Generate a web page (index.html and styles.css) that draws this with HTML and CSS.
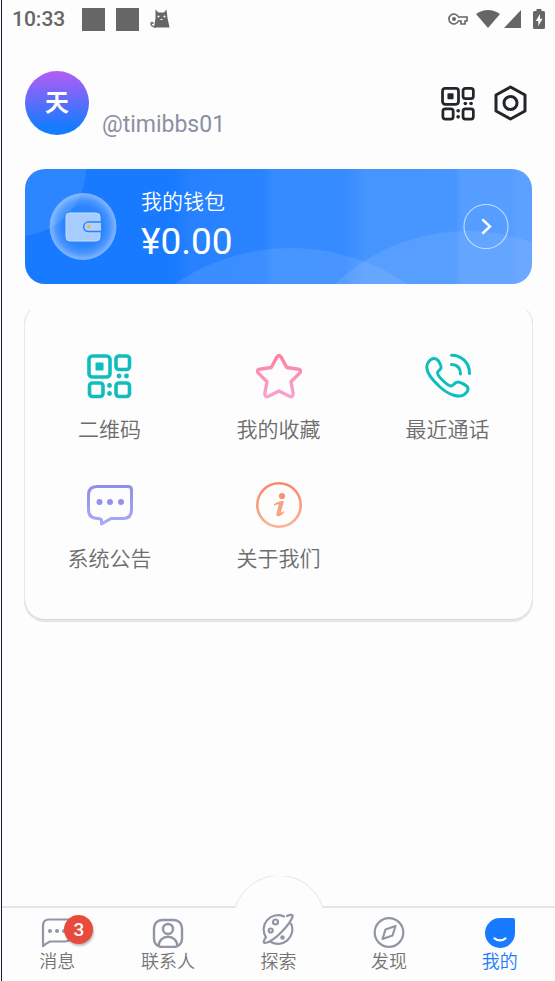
FILE: index.html
```html
<!DOCTYPE html>
<html lang="zh-CN">
<head>
<meta charset="utf-8">
<meta name="viewport" content="width=device-width, initial-scale=1">
<title>我的</title>
<link rel="stylesheet" href="styles.css">
</head>
<body>
<svg class="defs" width="0" height="0" aria-hidden="true">
  <defs>
    <symbol id="qr" viewBox="0 0 46 46">
      <g fill="none" stroke="currentColor" stroke-width="3.6">
        <rect x="2" y="3" width="21" height="21" rx="3.5"/>
        <rect x="29" y="3" width="13.5" height="13.5" rx="3"/>
        <rect x="2.5" y="30" width="13.5" height="13.5" rx="3"/>
        <rect x="29" y="30" width="13.5" height="13.5" rx="3"/>
      </g>
      <g fill="currentColor">
        <rect x="8.5" y="9.5" width="8" height="8" rx="1"/>
        <circle cx="32" cy="23" r="2.4"/><circle cx="39.5" cy="23" r="2.4"/>
        <circle cx="22.5" cy="32.5" r="2.4"/><circle cx="22.5" cy="40.5" r="2.4"/>
      </g>
    </symbol>
  </defs>
</svg>
<div class="app">
  <div class="status">
    <span class="time">10:33</span>
    <span class="square"></span>
    <span class="square"></span>
    <svg class="cat" width="20" height="20" viewBox="0 0 20 20">
      <path fill="#666" d="M5.5 .5 L8.5 3.5 H14 L16.5 .5 L17.5 9 L19.5 18.5 H4 L5.5 9Z"/>
      <path fill="none" stroke="#666" stroke-width="1.3" d="M6 18 C2 18 .8 16 1 14.5 C1.3 13 3.3 13.2 3 15"/>
      <g fill="#fff"><circle cx="8.5" cy="7.5" r="1"/><circle cx="14.5" cy="7.5" r="1"/><rect x="10.5" y="10" width="2" height="1"/></g>
    </svg>
    <span class="spacer"></span>
    <svg class="key" width="20" height="14" viewBox="0 0 20 14">
      <path fill="none" stroke="#666" stroke-width="1.6" d="M10.5 5 A5 5 0 1 0 10.5 9 H13 V12 H17 V9 H19 V5Z"/>
      <circle cx="6" cy="7" r="2" fill="#666"/>
    </svg>
    <svg class="wifi" width="24" height="19" viewBox="0 0 24 19"><path fill="#666" d="M0 4 Q12 -4 24 4 L12 18Z"/></svg>
    <svg class="signal" width="17" height="18" viewBox="0 0 17 18"><path fill="#666" d="M17 0V18H0Z"/></svg>
    <svg class="battery" width="12" height="20" viewBox="0 0 12 20">
      <path fill="#666" d="M3.5 0H8.5V2H10.5Q12 2 12 3.5V18.5Q12 20 10.5 20H1.5Q0 20 0 18.5V3.5Q0 2 1.5 2H3.5Z"/>
      <path fill="#fff" d="M7 5 L2.8 12 H5.3 V17 L9.5 9.8 H7Z"/>
    </svg>
  </div>

  <header class="profile">
    <div class="avatar">天</div>
    <span class="handle">@timibbs01</span>
    <button class="icon-button" aria-label="二维码"><svg width="35" height="35"><use href="#qr"/></svg></button>
    <button class="icon-button" aria-label="设置">
      <svg width="35" height="37" viewBox="0 0 35 37" fill="none" stroke="#222529" stroke-width="3">
        <path stroke-linejoin="round" d="M17.5 2 L32 10 V26 L17.5 34 L3 26 V10Z"/>
        <circle cx="17.5" cy="18" r="6.5"/>
      </svg>
    </button>
  </header>

  <main>
    <a class="wallet" href="#wallet">
      <svg class="wallet-art" viewBox="0 0 507 115" preserveAspectRatio="xMidYMid slice" aria-hidden="true">
        <defs>
          <linearGradient id="sheen" x1="0" x2="1" y1="0" y2="0">
            <stop offset=".29" stop-color="#187aff"/><stop offset=".33" stop-color="#2882ff"/>
            <stop offset=".47" stop-color="#2a84ff"/><stop offset=".49" stop-color="#358bff"/>
            <stop offset=".63" stop-color="#368bff"/><stop offset=".67" stop-color="#4695ff"/>
            <stop offset=".85" stop-color="#4796ff"/><stop offset=".86" stop-color="#559dff"/>
            <stop offset=".96" stop-color="#559dff"/><stop offset=".97" stop-color="#5ca1ff"/>
          </linearGradient>
          <radialGradient id="glass">
            <stop offset=".6" stop-color="#fff" stop-opacity=".08"/>
            <stop offset=".82" stop-color="#fff" stop-opacity=".22"/>
            <stop offset="1" stop-color="#fff" stop-opacity=".46"/>
          </radialGradient>
        </defs>
        <rect width="507" height="115" fill="url(#sheen)"/>
        <g fill="#fff" fill-opacity=".09">
          <circle cx="-7" cy="-1" r="68"/>
          <circle cx="266" cy="284" r="205"/>
          <circle cx="442" cy="253" r="191"/>
        </g>
      </svg>
      <svg class="wallet-icon" width="68" height="68" viewBox="0 0 68 68" aria-hidden="true">
        <circle cx="34" cy="33.5" r="33" fill="url(#glass)" stroke="#78b0ff" stroke-width="1"/>
        <rect x="17" y="20" width="34" height="28" rx="4" fill="#a9ccff" stroke="#c3dcff"/>
        <path d="M52 29H39.5a4.8 4.8 0 0 0 0 9.6H52" fill="#b0d0ff" stroke="#2b82f4" stroke-width="1.5"/>
        <circle cx="40" cy="33.8" r="1.7" fill="#f5b52e"/>
      </svg>
      <span class="wallet-text">
        <span class="wallet-title">我的钱包</span>
        <span class="wallet-amount">¥0.00</span>
      </span>
      <svg class="wallet-go" width="46" height="46" viewBox="0 0 46 46" fill="none" stroke="#fff" aria-hidden="true">
        <circle cx="23" cy="22.5" r="22" stroke-opacity=".6" stroke-width="1.2"/>
        <path stroke-width="2.4" stroke-linecap="round" d="M20 16 L27 22.5 L20 29"/>
      </svg>
    </a>

    <nav class="menu" aria-label="功能">
      <a href="#qrcode"><svg class="teal" width="46" height="46"><use href="#qr"/></svg><span>二维码</span></a>
      <a href="#favorites">
        <svg width="46" height="46" viewBox="0 0 46 46">
          <defs><linearGradient id="pink" x2="0" y2="1"><stop stop-color="#ff819c"/><stop offset="1" stop-color="#f9a3cc"/></linearGradient></defs>
          <path fill="none" stroke="url(#pink)" stroke-width="3.4" stroke-linejoin="round" d="M20.7 4.4 Q23 .6 25.3 4.4 L30.7 14.5 L42.5 16.2 Q46 17.1 43.6 20.1 L35 28.7 L37.2 40.5 Q37.1 44.8 33.5 43.3 L23 38 L12.5 43.3 Q8.9 44.8 8.8 40.5 L11 28.7 L2.4 20.1 Q0 17.1 3.5 16.2 L15.3 14.5Z"/>
        </svg><span>我的收藏</span></a>
      <a href="#calls">
        <svg class="teal" width="46" height="46" viewBox="0 0 46 46" fill="none" stroke="currentColor" stroke-width="3" stroke-linecap="round" stroke-linejoin="round">
          <path d="M3.2 9.5 C6 5.2 9.5 5 12 6.5 C14 8 16.5 13 16 15 C15.5 17 12.5 17.5 12.5 20 C12.7 23.5 22.5 32.8 26 33 C29 33 29.5 28.5 33 29 C36 29.5 41 32 42.5 34 C44 37 41.5 40 38.5 42 C34 44.5 25 43 15 34 C4 24 -.5 15 3.2 9.5Z"/>
          <path d="M26.5 11.5 C32 11.7 35.5 15 35.5 21 M26.5 2.3 C37 2.2 44.5 10 44.5 20.5"/>
        </svg><span>最近通话</span></a>
      <a href="#notices">
        <svg width="46" height="46" viewBox="0 0 46 46">
          <defs><linearGradient id="violet" x2="0" y2="1"><stop stop-color="#8e8eee"/><stop offset="1" stop-color="#a9a9f4"/></linearGradient></defs>
          <path fill="none" stroke="url(#violet)" stroke-width="3" stroke-linejoin="round" d="M10 4.5 H41 Q44.5 4.5 44.5 8 V28 Q44.5 36.5 36 36.5 H24 L14.5 42 V38 Q14 36.5 11 36.5 Q1.5 36.5 1.5 27.5 V13 Q1.5 4.5 10 4.5Z"/>
          <g fill="#9492ef"><circle cx="12.5" cy="20" r="3"/><circle cx="23" cy="20" r="3"/><circle cx="34" cy="20" r="3"/></g>
        </svg><span>系统公告</span></a>
      <a href="#about">
        <svg width="46" height="46" viewBox="0 0 46 46">
          <defs><linearGradient id="orange" x2="0" y2="1"><stop stop-color="#fb8767"/><stop offset="1" stop-color="#f9b393"/></linearGradient></defs>
          <circle cx="23" cy="23" r="21.7" fill="none" stroke="url(#orange)" stroke-width="2.6"/>
          <circle cx="26" cy="14" r="3.1" fill="#f99270"/>
          <path fill="#f8a27f" d="M18 22.5 C20 20 24 18.8 28 19 L25 30 C24.7 31.3 26 31 28 29 L28.5 30 C25.5 34.5 19.5 36 20.5 31.5 L22.7 23 C22.5 21.5 20.5 22 18.3 24Z"/>
        </svg><span>关于我们</span></a>
    </nav>
  </main>

  <nav class="tabs" aria-label="主导航">
    <svg class="bump" width="90" height="32" viewBox="0 0 90 32" aria-hidden="true">
      <path fill="#fdfdfd" d="M1 32 A46 46 0 0 1 89 32Z"/>
      <path fill="none" stroke="#e5e5e5" d="M1 32 A46 46 0 0 1 89 32"/>
    </svg>
    <a href="#messages">
      <span class="tab-icon">
        <svg width="32" height="32" viewBox="0 0 32 32" fill="none" stroke="currentColor" stroke-width="2.2" stroke-linejoin="round">
          <path d="M8 3.5 H28 Q30 3.5 30 5.5 V19 Q30 25.5 24 25.5 H9 Q6 27 2 30 V10 Q2 3.5 8 3.5Z"/>
          <g fill="currentColor" stroke="none"><circle cx="9" cy="15" r="2"/><circle cx="16" cy="15" r="2"/><circle cx="23" cy="15" r="2"/></g>
        </svg>
        <span class="badge">3</span>
      </span><span>消息</span></a>
    <a href="#contacts">
      <span class="tab-icon"><svg width="32" height="32" viewBox="0 0 32 32" fill="none" stroke="currentColor" stroke-width="2.4">
        <rect x="2" y="4" width="28" height="27" rx="8"/><circle cx="16" cy="13" r="5"/><path d="M6.5 30.5 C7 17.5 25 17.5 25.5 30.5"/>
      </svg></span><span>联系人</span></a>
    <a href="#explore">
      <span class="tab-icon raised"><svg width="32" height="32" viewBox="0 0 32 32" fill="none" stroke="currentColor" stroke-width="2.2" stroke-linecap="round" stroke-linejoin="round">
        <path d="M22 3.5 A14.3 14.3 0 0 0 4 24.3 M8.5 28.7 A14.3 14.3 0 0 0 29.2 11 M25 3 C28 1.5 31.5 1 30.5 4 C27 12.5 13 27.5 4 29.8 C.8 30.5 1 28 4 24.3"/>
        <circle cx="13.5" cy="9" r="2.5"/><circle cx="8.7" cy="17.5" r="2"/><circle cx="20.5" cy="24.5" r="1.2"/>
      </svg></span><span>探索</span></a>
    <a href="#discover">
      <span class="tab-icon"><svg width="32" height="32" viewBox="0 0 32 32" fill="none" stroke="currentColor" stroke-width="2.2" stroke-linejoin="round">
        <circle cx="16" cy="16.5" r="14.3"/><path d="M12.5 13.5 L22.5 10 L19.5 19.5 L9.5 23Z"/>
      </svg></span><span>发现</span></a>
    <a class="active" href="#me" aria-current="page">
      <span class="tab-icon"><svg width="32" height="32" viewBox="0 0 32 32">
        <path fill="currentColor" d="M16 2 H29 Q31 2 31 4 V17 A15 15 0 1 1 16 2Z"/>
        <path fill="none" stroke="#fff" stroke-width="2.2" stroke-linecap="round" d="M10.5 22.3 Q16 26.5 21.5 22.3"/>
      </svg></span><span>我的</span></a>
  </nav>
</div>
</body>
</html>
```

FILE: styles.css
```css
* { box-sizing: border-box; }

body {
  margin: 0;
  background: #fdfdfd;
  font-family: Roboto, "Noto Sans CJK SC", sans-serif;
  color: #6c6c6c;
}

a { color: inherit; text-decoration: none; }
svg { display: block; flex: none; }
.defs { position: absolute; }

.app {
  min-height: 100vh;
  display: flex;
  flex-direction: column;
  margin-left: 1px;
  border-left: 1px solid #17182f;
}

/* Status bar */
.status {
  display: flex;
  align-items: center;
  height: 38px;
  padding: 0 10px;
}
.time {
  margin-right: 17px;
  font-size: 21px;
  font-weight: 500;
  color: #666;
}
.square {
  width: 23px;
  height: 23px;
  margin-right: 11px;
  background: #666;
}
.spacer { flex: 1; }
.key { margin-right: 8px; }
.wifi { margin-right: 4px; }
.signal { margin-right: 12px; }

/* Profile */
.profile {
  display: flex;
  align-items: center;
  gap: 17px;
  padding: 33px 27px 0 23px;
}
.avatar {
  width: 64px;
  height: 64px;
  margin-right: -4px;
  border-radius: 50%;
  background: linear-gradient(#b45cf5, #157bff 88%);
  color: #fff;
  font-size: 24px;
  font-weight: 700;
  line-height: 64px;
  text-align: center;
}
.handle {
  flex: 1;
  align-self: flex-end;
  font-size: 23px;
  line-height: 20px;
  color: #8a90a2;
}
.icon-button {
  padding: 0;
  border: 0;
  background: none;
  color: #222529;
}

/* Wallet */
main { padding: 34px 23px 0; }

.wallet {
  position: relative;
  display: flex;
  align-items: center;
  height: 115px;
  padding: 0 23px 0 24px;
  border-radius: 20px;
  overflow: hidden;
  color: #fff;
}
.wallet-art {
  position: absolute;
  inset: 0;
  width: 100%;
  height: 100%;
}
.wallet-icon,
.wallet-text,
.wallet-go { position: relative; }
.wallet-text {
  flex: 1;
  display: flex;
  flex-direction: column;
  padding: 0 24px 6px;
}
.wallet-title {
  font-size: 21px;
  font-weight: 350;
  line-height: 36px;
}
.wallet-amount {
  font-size: 37px;
  line-height: 44px;
}

/* Menu card */
.menu {
  display: grid;
  grid-template-columns: repeat(3, 1fr);
  row-gap: 24px;
  margin-top: 20px;
  padding: 49px 0 33px;
  border-radius: 20px;
  box-shadow: 0 0 0 1px #e8e8e8, 0 1px 0 1px #e3e3e3, inset 0 -1px 0 #d8d8d8;
  clip-path: inset(6px -4px -4px -4px);
}
.menu a {
  display: flex;
  flex-direction: column;
  align-items: center;
  gap: 15px;
  padding-bottom: 12px;
  font-size: 21px;
  font-weight: 350;
  line-height: 32px;
}
.teal { color: #0fbdbe; }

/* Tab bar */
.tabs {
  position: relative;
  display: grid;
  grid-template-columns: repeat(5, 1fr);
  height: 75px;
  margin-top: auto;
  padding-top: 8px;
  border-top: 2px solid #e5e5e5;
}
.tabs a {
  position: relative;
  display: flex;
  flex-direction: column;
  align-items: center;
  gap: 1px;
  font-size: 18px;
  font-weight: 350;
  line-height: 26px;
  color: #747474;
}
.tabs .tab-icon { color: #9096a5; }
.tabs .active,
.tabs .active .tab-icon { color: #187aff; }
.tab-icon { position: relative; }
.raised { margin: -3px 0 3px; }
.bump {
  position: absolute;
  left: 50%;
  bottom: 73px;
  margin-left: -45px;
}
.badge {
  position: absolute;
  top: -1px;
  left: 23px;
  width: 29px;
  height: 29px;
  border-radius: 50%;
  background: #e84b3e;
  box-shadow: 1px 2px 2px rgba(0, 0, 0, .25);
  color: #fff;
  font-size: 19px;
  font-weight: 500;
  line-height: 29px;
  text-align: center;
}
```
